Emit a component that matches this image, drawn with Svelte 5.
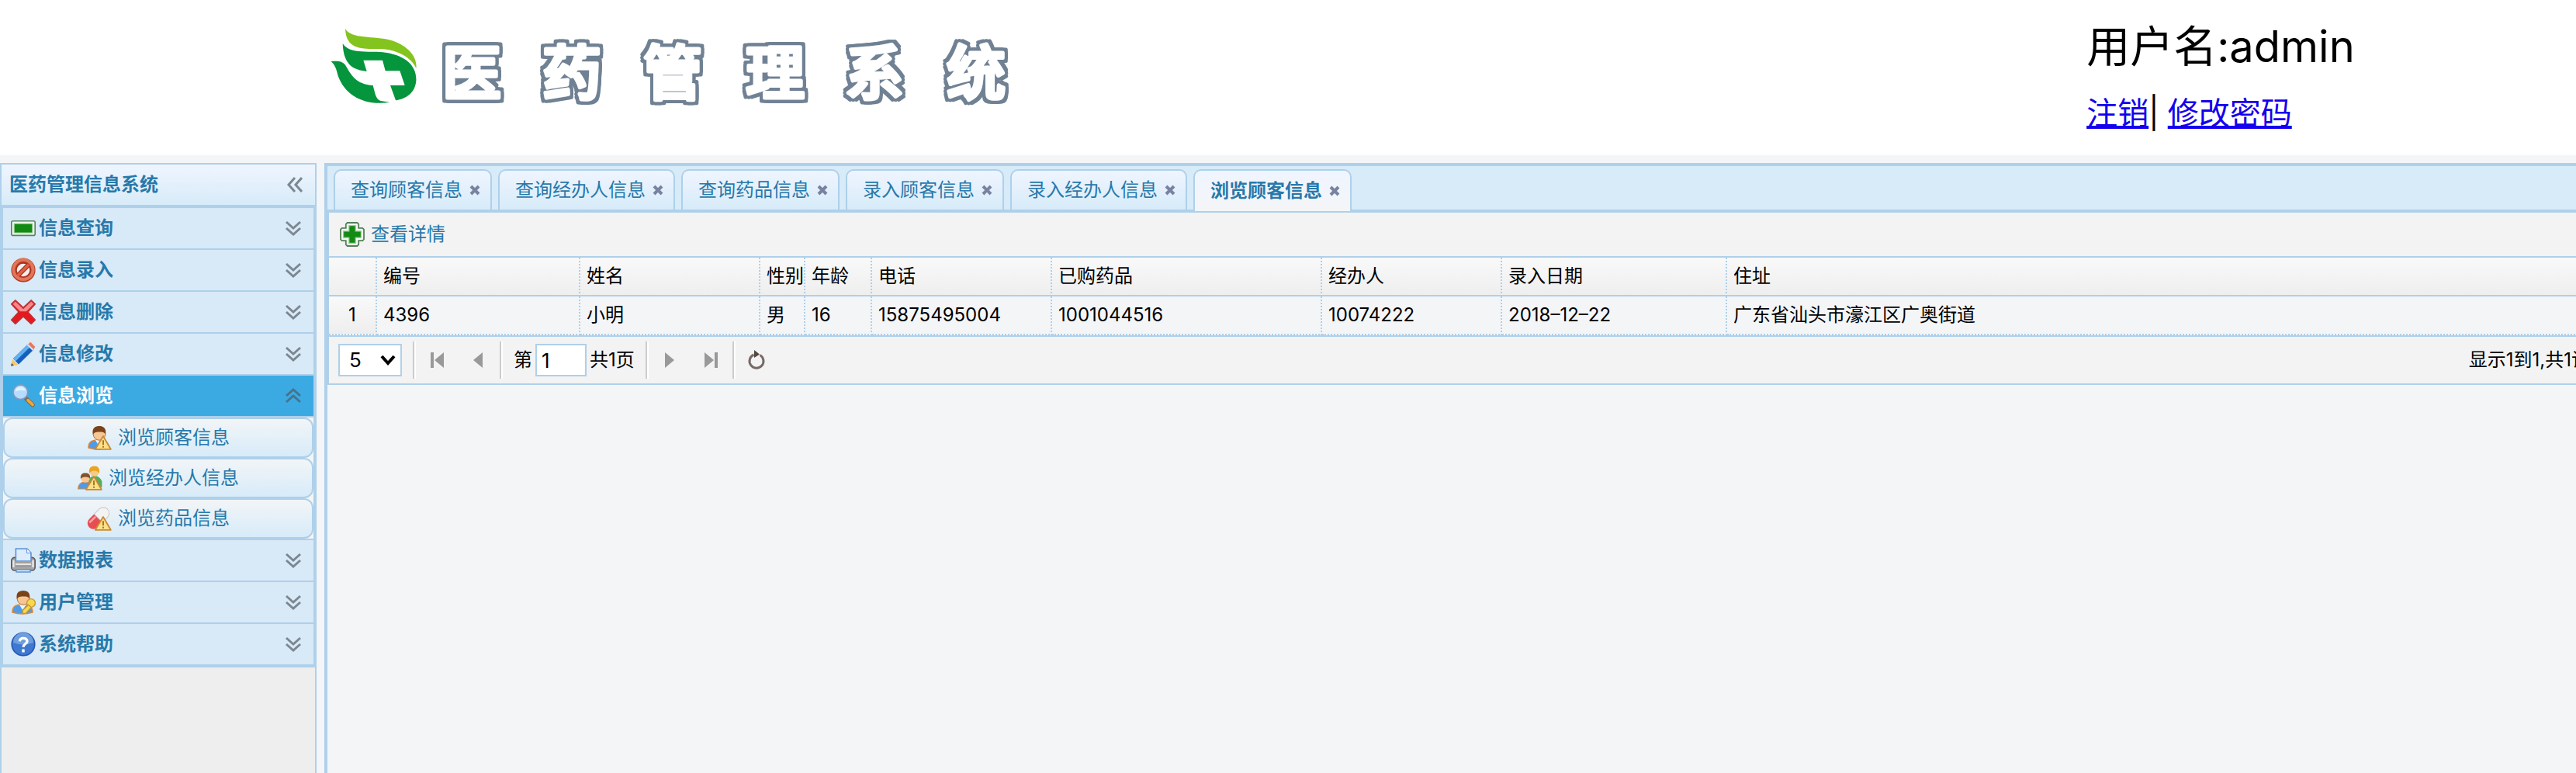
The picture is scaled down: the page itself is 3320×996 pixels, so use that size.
<script>
  const menu = [
    { label: '信息查询', icon: 'bar' },
    { label: '信息录入', icon: 'ban' },
    { label: '信息删除', icon: 'cross' },
    { label: '信息修改', icon: 'pencil' },
    {
      label: '信息浏览',
      icon: 'search',
      open: true,
      children: [
        { label: '浏览顾客信息', icon: 'userWarn' },
        { label: '浏览经办人信息', icon: 'groupWarn' },
        { label: '浏览药品信息', icon: 'pillWarn' }
      ]
    },
    { label: '数据报表', icon: 'printer' },
    { label: '用户管理', icon: 'userKey' },
    { label: '系统帮助', icon: 'help' }
  ];

  const tabs = ['查询顾客信息', '查询经办人信息', '查询药品信息', '录入顾客信息', '录入经办人信息', '浏览顾客信息'];
  let active = $state(5);

  const columns = [
    { title: '编号', width: 262 },
    { title: '姓名', width: 232 },
    { title: '性别', width: 58 },
    { title: '年龄', width: 86 },
    { title: '电话', width: 232 },
    { title: '已购药品', width: 348 },
    { title: '经办人', width: 232 },
    { title: '录入日期', width: 290 }
  ];
  const rows = [
    ['4396', '小明', '男', '16', '15875495004', '1001044516', '10074222', '2018–12–22', '广东省汕头市濠江区广奥街道']
  ];
</script>

{#snippet warning()}
  <path d="M10.5 7 15.4 15.4H5.4Z" fill="#fbe08a" stroke="#c98a35" stroke-width=".9" stroke-linejoin="round" />
  <path d="M10.5 9.6v3M10.5 13.4v1" stroke="#a8781e" stroke-width="1" />
{/snippet}

{#snippet person()}
  <path d="M1 14.5C1 10.8 3 9.5 7.500 9.500S14 11 14 14.500Q7.500 16.500 1 14.500Z" fill="#4f9be8" stroke="#d58a45" stroke-width=".8" />
  <path d="M5.500 9.500 7.500 13 10 9.500Z" fill="#eef4fb" />
  <circle cx="8" cy="5.700" r="3.900" fill="#f6c793" stroke="#b5743a" stroke-width=".5" />
  <path d="M3.900 6C3 1.500 5.600.5 8 .5S12.800 1.600 12 6C11.300 4.200 9.500 4.300 8 4.300S4.900 4.300 3.900 6Z" fill="#7a431a" />
{/snippet}

{#snippet icon(name)}
  <svg class="icon" viewBox="0 0 16 16" aria-hidden="true">
    {#if name === 'bar'}
      <rect x=".4" y="3.400" width="15.200" height="9.300" rx="1" fill="#f1f8ee" stroke="#54845a" stroke-width=".8" />
      <rect x="2.100" y="5.100" width="11.800" height="5.900" fill="#128a14" stroke="#9fce9a" stroke-width=".5" />
    {:else if name === 'ban'}
      <circle cx="8" cy="8" r="7.800" fill="#b83a22" />
      <circle cx="8" cy="7.700" r="6.300" fill="none" stroke="#e0765a" stroke-width="2" />
      <circle cx="8" cy="8" r="4.500" fill="#f6eeec" stroke="#a93320" stroke-width=".7" />
      <path d="m4.700 11.300 6.600-6.600" stroke="#a93320" stroke-width="3" />
      <path d="m4.500 11.500 7-7" stroke="#dd6247" stroke-width="1.700" />
    {:else if name === 'cross'}
      <path d="M2.900.4 8 5.100 13.100.4 15.700 2.900 11 8 15.700 13.100 13.100 15.700 8 11 2.900 15.700.3 13.100 5 8 .3 2.900Z" fill="#e41a1e" stroke="#b9363a" stroke-width=".7" stroke-linejoin="round" />
      <path d="M2.900 1.300 8 6.100 13.100 1.300 14.700 2.900 10 7.600H6L1.300 2.900Z" fill="#f58a8d" />
    {:else if name === 'pencil'}
      <path d="M1 11.500 4.800 15 0 15.800Z" fill="#f6c766" />
      <path d="M.5 14 2 15.400 0 15.900Z" fill="#555" />
      <path d="M1.500 11 11 1.700 14.700 5.200 5 14.700Z" fill="#1560bd" />
      <path d="M1.500 11 11 1.700 12.700 3.200 3 12.800Z" fill="#62b1f2" />
      <path d="m11 1.700 1.700-1.300 2.900 3-1 1.900Z" fill="#f0745c" />
      <path d="m10.300 2.300.8-.7 3.600 3.600-.8.7Z" fill="#d7e4ef" />
    {:else if name === 'search'}
      <path d="m10 10 4 3.800" stroke="#7e6b58" stroke-width="2.800" stroke-linecap="round" />
      <path d="m11 10.800 3 2.900" stroke="#f3a72f" stroke-width="1.800" stroke-linecap="round" />
      <circle cx="6.200" cy="5.600" r="4.700" fill="#b4dcff" stroke="#8098bd" stroke-width=".9" />
      <path d="M2.800 5.200a3.500 3.500 0 0 1 6.800-.4Q6 4 2.800 5.200Z" fill="#e2f2ff" />
    {:else if name === 'printer'}
      <rect x=".4" y="6.200" width="15.200" height="8.300" rx="2" fill="#a5a5a5" stroke="#5c5c5c" stroke-width=".8" />
      <rect x="3" y="6.600" width="10" height="5" fill="#e6e6e6" />
      <path d="M1.700 8v4.500M14.300 8v4.500" stroke="#e8e8e8" stroke-width="1.200" />
      <path d="M3.200 8.500V.5h7.200L13 3.200v5.300Z" fill="#dcebfd" stroke="#5c91d4" stroke-width=".8" />
      <path d="M10.300.6v2.700H13" fill="#f7fbff" stroke="#5c91d4" stroke-width=".5" />
      <path d="M3 9.500h10M3 11.500h10" stroke="#8b8b8b" stroke-width=".7" />
      <path d="M3.500 14h9v1.500h-9Z" fill="#e6f0fd" stroke="#5c91d4" stroke-width=".7" />
    {:else if name === 'help'}
      <circle cx="8" cy="8" r="7.800" fill="#2755b2" />
      <circle cx="8" cy="8" r="7" fill="#3f78cf" />
      <path d="M1.500 7a6.500 6.500 0 0 1 13 0Q8 9.500 1.500 7Z" fill="#6d9fe0" />
      <path d="M5.700 6.200Q5.800 4.200 8.100 4.200T10.500 6.200C10.500 7.700 8 7.900 8 9.900M8 11.300v1.900" fill="none" stroke="#fff" stroke-width="1.700" />
    {:else if name === 'userKey'}
      {@render person()}
      <circle cx="13" cy="8.500" r="2.700" fill="#f9d84d" stroke="#c79a31" stroke-width=".7" />
      <path d="m11.400 9.600 1.700 1.800-3.600 3.800H7.600v-1.900Z" fill="#f9d84d" stroke="#c79a31" stroke-width=".7" />
    {:else if name === 'userWarn'}
      {@render person()}
      {@render warning()}
    {:else if name === 'groupWarn'}
      <path d="M7 10Q8 6.500 11 6.500T15.700 10V14H7Z" fill="#56ad5b" />
      <circle cx="10.800" cy="4" r="3" fill="#f5c98f" />
      <path d="M7.500 5C7 1.500 8.500.2 10.800.2S14.500 1.500 14 5C13 2.800 9 2.500 7.500 5Z" fill="#e8a51f" />
      <path d="M.3 15Q.5 10.500 5 10.500T10 15Z" fill="#4f9be8" stroke="#d58a45" stroke-width=".6" />
      <circle cx="5" cy="8" r="2.900" fill="#f6c793" />
      <path d="M2 8.500C1.600 5.600 3.200 4.800 5 4.800S8.500 5.600 8 8.500C7 7 3.500 6.800 2 8.500Z" fill="#82512c" />
      {@render warning()}
    {:else if name === 'pillWarn'}
      <g transform="rotate(-45 7.500 8)">
        <rect x="-.8" y="4" width="16.600" height="7.600" rx="3.800" fill="#e94d52" />
        <path d="M7.500 4H12a3.800 3.800 0 0 1 0 7.600H7.500Z" fill="#f3f3f3" stroke="#c9c9c9" stroke-width=".5" />
        <path d="M2 5.800h4.500" stroke="#f9a5a6" stroke-width="1.300" stroke-linecap="round" />
      </g>
      {@render warning()}
    {:else if name === 'plus'}
      <path d="M4.800.5h6.400l.9.900v2.500h2.500l.9.900v6.400l-.9.900h-2.500v2.500l-.9.900H4.800l-.9-.9v-2.500H1.400l-.9-.9V4.800l.9-.9h2.500V1.400Z" fill="#f3faf1" stroke="#548059" stroke-width=".9" />
      <path d="M5.900 2.300h4.200v3.600h3.600v4.200h-3.600v3.600H5.900v-3.600H2.300V5.900h3.600Z" fill="#128a14" stroke="#9bcf99" stroke-width=".6" />
    {/if}
  </svg>
{/snippet}

<div class="page">
  <header class="top">
    <svg class="brand" viewBox="0 0 900 130" role="img" aria-label="医药管理系统">
      <g transform="translate(0 10) scale(.3334)">
        <path d="M75 20C95 62 190 48 250 65C310 83 355 125 349 174C330 132 280 104 215 99C150 98 77 108 75 20Z" fill="#84c41e" />
        <path d="M65 78C90 122 180 105 230 113C310 125 352 165 349 222C345 270 310 292 270 298L249 240H305L286 184H230L219 143H145L158 186C110 180 68 165 65 78Z" fill="#05953c" />
        <path d="M20 147C45 145 65 145 77 164C98 200 115 235 182 240C190 270 193 295 212 300L247 305C150 320 75 280 47 203C42 185 39 165 20 147Z" fill="#05953c" />
      </g>
      <text class="brand-text" y="102" x="150 279 409 541 669 800">医药管理系统</text>
    </svg>
    <div class="user">
      <div class="name">用户名:admin</div>
      <div class="links"><a href="#logout">注销</a>| <a href="#password">修改密码</a></div>
    </div>
  </header>

  <div class="body">
    <aside class="side">
      <div class="side-title">
        <h1>医药管理信息系统</h1>
        <button class="bare" aria-label="收起">
          <svg class="chev" viewBox="0 0 20 20" aria-hidden="true"><path d="m10 1-8 9 8 9M19 1l-8 9 8 9" /></svg>
        </button>
      </div>
      <nav class="accordion">
        {#each menu as item}
          <button class="item" class:open={item.open} aria-expanded={!!item.open}>
            {@render icon(item.icon)}
            <span>{item.label}</span>
            <svg class="chev" viewBox="0 0 20 20" aria-hidden="true">
              {#if item.open}
                <path d="m1 10 9-8 9 8M1 18l9-8 9 8" />
              {:else}
                <path d="m1 2 9 8 9-8M1 10l9 8 9-8" />
              {/if}
            </svg>
          </button>
          {#if item.children}
            <div class="children">
              {#each item.children as child}
                <button class="child">{@render icon(child.icon)}{child.label}</button>
              {/each}
            </div>
          {/if}
        {/each}
      </nav>
    </aside>

    <main class="main">
      <div class="tabs">
        {#each tabs as tab, i}
          <div class="tab" class:selected={i === active}>
            <button class="bare" onclick={() => (active = i)}>{tab}</button>
            <button class="bare close" aria-label="关闭">
              <svg viewBox="0 0 16 16" aria-hidden="true"><path d="m3 3 10 10M13 3 3 13" /></svg>
            </button>
          </div>
        {/each}
      </div>

      <section class="grid">
        <div class="toolbar">
          <button class="bare tool">{@render icon('plus')}查看详情</button>
        </div>

        <table>
          <colgroup>
            <col style="width: 62px" />
            {#each columns as c}<col style="width: {c.width}px" />{/each}
            <col />
          </colgroup>
          <thead>
            <tr>
              <th></th>
              {#each columns as c}<th>{c.title}</th>{/each}
              <th>住址</th>
            </tr>
          </thead>
          <tbody>
            {#each rows as row, i}
              <tr>
                <td class="num">{i + 1}</td>
                {#each row as cell}<td>{cell}</td>{/each}
              </tr>
            {/each}
          </tbody>
        </table>

        <div class="pager">
          <div class="size">
            <select aria-label="每页条数"><option>5</option><option>10</option></select>
            <svg viewBox="0 0 20 20" aria-hidden="true"><path d="m2 5 8 9 8-9" /></svg>
          </div>
          <i class="sep"></i>
          <button class="bare nav" aria-label="第一页"><svg viewBox="0 0 32 32" aria-hidden="true"><path d="M8 6h4v20H8ZM25 6v20L13 16Z" /></svg></button>
          <button class="bare nav" aria-label="上一页"><svg viewBox="0 0 32 32" aria-hidden="true"><path d="M21 6v20L9 16Z" /></svg></button>
          <i class="sep"></i>
          <label class="jump">第<input type="text" value="1" />共1页</label>
          <i class="sep"></i>
          <button class="bare nav" aria-label="下一页"><svg viewBox="0 0 32 32" aria-hidden="true"><path d="M10 6v20l12-10Z" /></svg></button>
          <button class="bare nav" aria-label="最后一页"><svg viewBox="0 0 32 32" aria-hidden="true"><path d="M7 6v20l12-10ZM20 6h4v20h-4Z" /></svg></button>
          <i class="sep"></i>
          <button class="bare nav" aria-label="刷新">
            <svg viewBox="0 0 32 32" aria-hidden="true">
              <path d="M20.500 9.500a9 9 0 1 1-8-.5" fill="none" stroke="#766a66" stroke-width="3" />
              <path d="m13 3 7 5.500-7 4.500Z" fill="#55443f" />
            </svg>
          </button>
          <div class="info">显示1到1,共1记录</div>
        </div>
      </section>
    </main>
  </div>
</div>

<style>
  :global(body) {
    margin: 0;
    overflow: hidden;
    background: #f4f5f7;
  }

  .page {
    --line: #aed0ea;
    --ink: #2779aa;
    display: flex;
    flex-direction: column;
    min-height: 100vh;
    font: 24px/32px Inter, 'Noto Sans CJK SC', sans-serif;
    color: #000;
  }

  .page :global(*) {
    box-sizing: border-box;
  }

  svg {
    display: block;
    flex: none;
  }

  button,
  input,
  select {
    font: inherit;
    color: inherit;
  }

  .bare {
    padding: 0;
    border: 0;
    background: none;
    cursor: pointer;
  }

  .top {
    display: grid;
    grid-template-columns: 81% 1fr;
    height: 200px;
    background: #fff;
  }

  .brand {
    width: 900px;
    height: 130px;
    margin: 20px 0 0 420px;
    overflow: visible;
  }

  .brand-text {
    font: 500 76px 'Noto Sans CJK SC', sans-serif;
    fill: #fff;
    stroke: #fff;
    stroke-width: 5px;
    stroke-linejoin: round;
    filter: drop-shadow(4px 0 0 #708194) drop-shadow(-4px 0 0 #708194) drop-shadow(0 4px 0 #708194) drop-shadow(0 -4px 0 #708194);
  }

  .user {
    padding-top: 20px;
    white-space: nowrap;
  }

  .name {
    font-size: 56px;
    line-height: 80px;
  }

  .links {
    margin-top: 16px;
    font-size: 40px;
    line-height: 60px;
  }

  .links a {
    color: #1400ee;
  }

  .body {
    display: flex;
    flex: 1;
    gap: 10px;
    padding-top: 10px;
  }

  .side {
    flex: none;
    width: 408px;
    border: 2px solid var(--line);
    border-bottom: 0;
    background: #eee;
  }

  .side-title {
    display: flex;
    align-items: center;
    justify-content: space-between;
    height: 54px;
    padding: 0 16px 0 10px;
    border-bottom: 2px solid var(--line);
    background: linear-gradient(#eff5ff, #d7ebf9);
    color: var(--ink);
  }

  h1 {
    margin: 0;
    font: inherit;
    font-weight: 700;
  }

  .chev {
    width: 20px;
    height: 20px;
    fill: none;
    stroke: #7c8791;
    stroke-width: 3px;
  }

  .accordion {
    border: 2px solid var(--line);
  }

  .item {
    display: flex;
    align-items: center;
    gap: 4px;
    width: 100%;
    height: 54px;
    padding: 0 16px 0 10px;
    border: 0;
    border-bottom: 2px solid var(--line);
    background: #d8e9f7;
    color: var(--ink);
    font-weight: 700;
    text-align: left;
  }

  .item span {
    flex: 1;
  }

  .item.open {
    background: #3baae3;
    color: #fff;
  }

  .item.open .chev {
    stroke: #4a7288;
  }

  .icon {
    width: 32px;
    height: 32px;
  }

  .children {
    border-bottom: 2px solid var(--line);
    background: #f4f5f7;
  }

  .child {
    display: flex;
    align-items: center;
    justify-content: center;
    gap: 8px;
    width: 100%;
    height: 52px;
    padding: 0;
    border: 2px solid var(--line);
    border-radius: 12px;
    background: linear-gradient(#f2f5f7, #d7ebf9);
    color: var(--ink);
  }

  .main {
    flex: 1;
    min-width: 0;
    margin-right: -54px;
    border: solid var(--line);
    border-width: 4px 0 0 4px;
  }

  .tabs {
    display: flex;
    gap: 8px;
    height: 58px;
    padding: 4px 8px 0;
    border-bottom: 2px solid var(--line);
    background: #d7ebf9;
  }

  .tab {
    display: flex;
    align-items: center;
    gap: 8px;
    height: 52px;
    padding: 0 12px 0 20px;
    border: 2px solid var(--line);
    border-bottom: 0;
    border-radius: 10px 10px 0 0;
    background: linear-gradient(#eff5ff, #d7ebf9);
    color: var(--ink);
    white-space: nowrap;
  }

  .tab.selected {
    position: relative;
    height: 54px;
    background: linear-gradient(#eff5ff, #f4f5f7);
    font-weight: 700;
  }

  .close svg {
    width: 16px;
    height: 16px;
    fill: none;
    stroke: #7783a0;
    stroke-width: 4px;
  }

  .grid {
    border: solid var(--line);
    border-width: 2px 0 2px 2px;
    background: #f3f3f3;
  }

  .toolbar {
    display: flex;
    align-items: center;
    height: 58px;
    padding: 0 14px;
    border-bottom: 2px solid var(--line);
  }

  .tool {
    display: flex;
    align-items: center;
    gap: 8px;
    color: var(--ink);
  }

  table {
    width: 100%;
    table-layout: fixed;
    border-spacing: 0;
  }

  th,
  td {
    height: 50px;
    padding: 0 0 0 8px;
    border-right: 2px dotted var(--line);
    border-bottom: 2px dotted var(--line);
    font-weight: 400;
    text-align: left;
    white-space: nowrap;
  }

  th {
    border-bottom-style: solid;
  }

  thead tr,
  .num {
    background: linear-gradient(#f9f9f9, #eee);
  }

  td {
    background: #f4f5f7;
  }

  .num {
    padding: 0;
    text-align: center;
  }

  .pager {
    display: flex;
    align-items: center;
    height: 62px;
    padding: 0 12px;
    border-top: 2px solid var(--line);
  }

  .size {
    display: grid;
    align-items: center;
    width: 82px;
    margin-right: 14px;
  }

  .size > * {
    grid-area: 1 / 1;
  }

  select,
  .jump input {
    height: 42px;
    border: 2px solid var(--line);
    border-radius: 0;
    background: #fff;
    font-size: 26px;
  }

  select {
    width: 100%;
    padding: 0 12px;
    appearance: none;
  }

  .size svg {
    justify-self: end;
    width: 20px;
    height: 20px;
    margin-right: 8px;
    fill: none;
    stroke: #000;
    stroke-width: 4px;
    pointer-events: none;
  }

  .sep {
    width: 4px;
    height: 48px;
    border-left: 2px solid #ccc;
    border-right: 2px solid #fff;
  }

  .nav {
    margin: 0 11px;
  }

  .nav svg {
    width: 32px;
    height: 32px;
    fill: #999;
  }

  .jump {
    display: flex;
    align-items: center;
    gap: 4px;
    margin: 0 14px;
    white-space: nowrap;
  }

  .jump input {
    width: 66px;
    padding: 0 6px;
  }

  .info {
    margin-left: auto;
    white-space: nowrap;
  }
</style>
